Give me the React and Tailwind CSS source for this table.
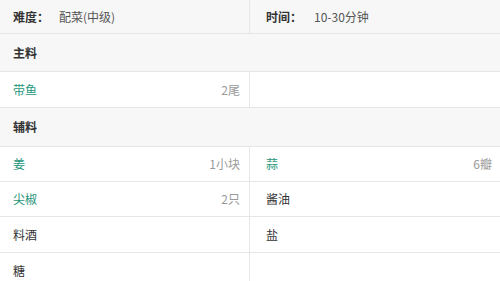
import React from 'react';

const font = { fontFamily: '"Microsoft YaHei", "Noto Sans CJK SC", "Liberation Sans", sans-serif' };

const main = [[{ name: '带鱼', amount: '2尾', link: true }, null]];
const extra = [
  [{ name: '姜', amount: '1小块', link: true }, { name: '蒜', amount: '6瓣', link: true }],
  [{ name: '尖椒', amount: '2只', link: true }, { name: '酱油' }],
  [{ name: '料酒' }, { name: '盐' }],
  [{ name: '糖' }, null],
];

function Cell({ item, right }) {
  return (
    <div
      className={
        'flex items-center justify-between ' +
        (right ? 'pl-[16px] pr-[8px]' : 'pl-[13px] pr-[9px] border-r border-[#e6e6e6]')
      }
    >
      {item ? (
        <>
          <span className={item.link ? 'text-[#27967a]' : 'text-[#333333]'}>{item.name}</span>
          {item.amount && <span className="text-[#9a9a9a]">{item.amount}</span>}
        </>
      ) : null}
    </div>
  );
}

function Rows({ rows, heights }) {
  return rows.map((r, i) => (
    <div
      key={i}
      className="grid grid-cols-2 bg-white border-b border-[#e6e6e6]"
      style={{ height: heights[i] }}
    >
      <Cell item={r[0]} />
      <Cell item={r[1]} right />
    </div>
  ));
}

function Section({ title, h }) {
  return (
    <div className={'flex items-center pl-[13px] bg-[#f7f7f7] border-b border-[#e6e6e6] font-bold text-[#333333] ' + h}>
      {title}
    </div>
  );
}

export default function App() {
  return (
    <div className="w-[500px] h-[281px] overflow-hidden bg-white text-[12px]" style={font}>
      <div className="grid grid-cols-2 h-[34px] bg-[#f7f7f7] border-b border-[#e6e6e6]">
        <div className="flex items-center pl-[13px] border-r border-[#e6e6e6]">
          <span className="w-[46px] font-bold text-[#333333]">难度：</span>
          <span className="text-[#555555]">配菜(中级)</span>
        </div>
        <div className="flex items-center pl-[16px]">
          <span className="w-[48px] font-bold text-[#333333]">时间：</span>
          <span className="text-[#555555]">10-30分钟</span>
        </div>
      </div>
      <Section title="主料" h="h-[38px]" />
      <Rows rows={main} heights={[36]} />
      <Section title="辅料" h="h-[39px]" />
      <Rows rows={extra} heights={[35, 35, 36, 36]} />
    </div>
  );
}
